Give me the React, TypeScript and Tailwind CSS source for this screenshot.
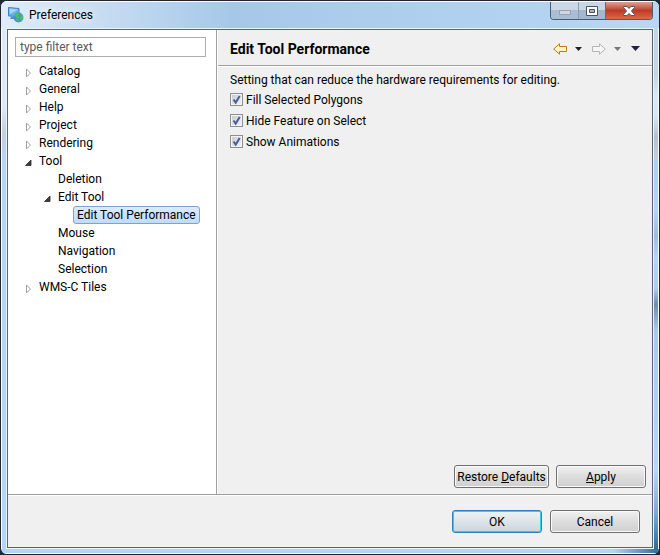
import type { ReactNode } from "react";

const ui = "font-[Roboto,'Open_Sans',sans-serif]";

function Expander({ open }: { open: boolean }) {
  return (
    <svg viewBox="0 0 7 10" className="mt-1 h-[10px] w-[7px] shrink-0">
      {open ? (
        <path d="M6 2V7.500H.5Z" fill="#404040" stroke="#262626" strokeWidth=".8" />
      ) : (
        <path d="M1.500 1V9L5.500 5Z" fill="#fff" stroke="#a0a0a0" strokeWidth="1" />
      )}
    </svg>
  );
}

type Node = { label: string; pad: string; state?: "open" | "closed"; selected?: boolean };

const nodes: Node[] = [
  { label: "Catalog", pad: "pl-[17px]", state: "closed" },
  { label: "General", pad: "pl-[17px]", state: "closed" },
  { label: "Help", pad: "pl-[17px]", state: "closed" },
  { label: "Project", pad: "pl-[17px]", state: "closed" },
  { label: "Rendering", pad: "pl-[17px]", state: "closed" },
  { label: "Tool", pad: "pl-[17px]", state: "open" },
  { label: "Deletion", pad: "pl-[36px]" },
  { label: "Edit Tool", pad: "pl-[36px]", state: "open" },
  { label: "Edit Tool Performance", pad: "pl-[55px]", selected: true },
  { label: "Mouse", pad: "pl-[36px]" },
  { label: "Navigation", pad: "pl-[36px]" },
  { label: "Selection", pad: "pl-[36px]" },
  { label: "WMS-C Tiles", pad: "pl-[17px]", state: "closed" },
];

function TreeRow({ node }: { node: Node }) {
  return (
    <li role="treeitem" aria-selected={!!node.selected} className={`flex h-[18px] items-center ${node.pad}`}>
      <span className="flex w-[10px] shrink-0">{node.state && <Expander open={node.state === "open"} />}</span>
      <span
        className={`flex h-[18px] items-center whitespace-nowrap rounded-[3px] border px-[3px] ${
          node.selected ? "border-[#7da2ce] bg-linear-to-b from-[#dcebfc] to-[#c1dbfc]" : "border-transparent"
        }`}
      >
        {node.label}
      </span>
    </li>
  );
}

function CheckRow({ label }: { label: string }) {
  return (
    <label className="flex h-[21px] items-center gap-[3px]">
      <span className="relative flex size-[13px]">
        <input
          type="checkbox"
          defaultChecked
          className="peer size-[13px] appearance-none border border-[#8e8f8f] bg-linear-to-br from-[#c4c9d0] to-[#f6f6f6] shadow-[inset_0_0_0_1px_#f4f4f4]"
        />
        <svg viewBox="0 0 13 13" className="pointer-events-none absolute inset-0 hidden size-[13px] peer-checked:block">
          <path d="M3.500 6.500L5.700 9.600L9.700 3" fill="none" stroke="#4a5f97" strokeWidth="2" />
        </svg>
      </span>
      {label}
    </label>
  );
}

function PushButton({ children, width, primary }: { children: ReactNode; width: string; primary?: boolean }) {
  return (
    <button
      type="button"
      className={`flex h-[23px] items-center justify-center whitespace-nowrap rounded-[3px] border ${width} ${
        primary
          ? "border-[#2c83b8] bg-linear-to-b from-[#f0f3f4] via-[#dde4e8] via-50% to-[#cbd5da] shadow-[inset_0_0_0_1px_#2fcdfa]"
          : "border-[#707070] bg-linear-to-b from-[#f1f1f1] via-[#dddddd] via-50% to-[#cfcfcf] shadow-[inset_0_0_0_1px_#fafafa]"
      }`}
    >
      {children}
    </button>
  );
}

function Caret({ color, size = "h-[4px] w-[7px]" }: { color: string; size?: string }) {
  return (
    <svg viewBox="0 0 7 4" preserveAspectRatio="none" className={size}>
      <path d="M0 0H7L3.500 4Z" fill={color} />
    </svg>
  );
}

export default function App() {
  return (
    <div className={`h-screen bg-[#1d2b36] text-[12px] leading-[16px] text-black ${ui}`}>
      <div className="flex h-full flex-col overflow-hidden rounded-[7px] border border-[#20242c] bg-[#b9d7f5]">
        <header className="flex h-[27px] shrink-0 items-start justify-between border-t border-white bg-linear-to-r from-[#e0ecf9] via-[#a6c8e8] via-35% to-[#b9d7f5] pr-[6px] pl-[7px]">
          <div className="flex h-[26px] items-center gap-[5px]">
            <svg viewBox="0 0 16 16" className="size-[16px]">
              <path d="M.5 .5L11 1.500V9.500L.5 9Z" fill="#69b3ea" stroke="#3c82c8" />
              <path d="M1.500 1.500L10 2.500L2 7Z" fill="#a5d8f8" />
              <path d="M3 10H7V12H2Z" fill="#4c8fd0" />
              <circle cx="10.500" cy="10.500" r="5" fill="#4c8fd0" />
              <path d="M6 8L9 5.500L12 7L10 9L12 10L10 12L11 15L8 13L9 11ZM12 6L15 9L15 12L13 14L12 11L13 9Z" fill="#46c45a" />
            </svg>
            <h1 className="[text-shadow:0_0_8px_#fff,0_0_12px_#fff]">Preferences</h1>
          </div>
          <div className="flex h-[18px] overflow-hidden rounded-b-[4px] border border-t-0 border-[#4c5b70]">
            <button type="button" aria-label="Minimize" className="flex w-[28px] items-center justify-center border-r border-[#8c9db3] bg-linear-to-b from-[#cbd7e4] from-50% to-[#aabdd2] to-50%">
              <span className="mt-1 h-[5px] w-[12px] border border-[#96a4b4] bg-[#cfd8e2]" />
            </button>
            <button type="button" aria-label="Maximize" className="flex w-[27px] items-center justify-center border-r border-[#5d6f86] bg-linear-to-b from-[#c9d6e4] from-50% to-[#a3b8cf] to-50%">
              <svg viewBox="0 0 12 10" className="h-[10px] w-[12px]">
                <path d="M.5 .5H11.500V9.500H.5Z M3.500 3.500H8.500V6.500H3.500Z" fill="#fff" fillRule="evenodd" stroke="#4a5262" />
              </svg>
            </button>
            <button type="button" aria-label="Close" className="flex w-[46px] items-center justify-center bg-linear-to-b from-[#dfa093] from-0% via-[#bd3a24] via-50% to-[#d9694a]">
              <svg viewBox="0 0 12 10" className="h-[10px] w-[12px]">
                <path d="M.5 .5H4L6 2.500L8 .5H11.500V1.500L8.500 5L11.500 8.500V9.500H8L6 7.500L4 9.500H.5V8.500L3.500 5L.5 1.500Z" fill="#fff" stroke="#53555f" />
              </svg>
            </button>
          </div>
        </header>

        <div className="flex min-h-0 flex-1">
          <div className="w-[5px] shrink-0 border-l border-white bg-linear-to-b from-[#dceafa] from-15% via-[#c5d0dd] via-20% to-[#b4d5f8] to-27%" />
          <main className="flex min-h-0 min-w-0 flex-1 flex-col border border-[#eaf4fd]">
            <div className="flex min-h-0 flex-1 flex-col border border-[#566676] bg-[#f0f0f0]">
              <div className="flex min-h-0 flex-1">
                <aside className="w-[209px] shrink-0 border-r border-[#a0a0a0] bg-white pt-[7px]">
                  <input
                    type="text"
                    aria-label="Filter"
                    placeholder="type filter text"
                    className="ml-[7px] block h-[20px] w-[191px] border border-[#abadb3] bg-white px-1 placeholder:text-[#5a5a5a]"
                  />
                  <ul role="tree" className="mt-[5px]">
                    {nodes.map((n) => (
                      <TreeRow key={n.label} node={n} />
                    ))}
                  </ul>
                </aside>
                <section className="flex min-w-0 flex-1 flex-col border-l border-white">
                  <div className="flex h-[36px] shrink-0 items-center justify-between border-b border-[#a0a0a0] pt-[2px] pr-3 pl-3">
                    <h2 className="text-[14px] font-bold">Edit Tool Performance</h2>
                    <div className="flex items-center gap-[10px]">
                      <div className="flex items-center gap-[8px]">
                        <button type="button" aria-label="Back">
                          <svg viewBox="0 0 14 12" className="h-[12px] w-[14px]">
                            <path d="M.7 6L6.500 .8V3.500H13.500V8.500H6.500V11.200Z" fill="#fff6c4" stroke="#b87a14" />
                          </svg>
                        </button>
                        <button type="button" aria-label="Back history"><Caret color="#222" /></button>
                      </div>
                      <div className="flex items-center gap-[8px]">
                        <button type="button" aria-label="Forward">
                          <svg viewBox="0 0 14 12" className="h-[12px] w-[14px]">
                            <path d="M13.300 6L7.500 .8V3.500H.5V8.500H7.500V11.200Z" fill="#f6f6f6" stroke="#b4b4b4" />
                          </svg>
                        </button>
                        <button type="button" aria-label="Forward history"><Caret color="#777" /></button>
                      </div>
                      <button type="button" aria-label="Menu"><Caret color="#2a1a4a" size="h-[5px] w-[9px]" /></button>
                    </div>
                  </div>
                  <div className="flex flex-1 flex-col border-t border-white pt-[5px] pr-[6px] pb-[6px] pl-3">
                    <p className="leading-[17px]">Setting that can reduce the hardware requirements for editing.</p>
                    <div>
                      <CheckRow label="Fill Selected Polygons" />
                      <CheckRow label="Hide Feature on Select" />
                      <CheckRow label="Show Animations" />
                    </div>
                    <div className="mt-auto flex justify-end gap-[7px]">
                      <PushButton width="w-[95px]"><span>Restore <u>D</u>efaults</span></PushButton>
                      <PushButton width="w-[90px]"><span><u>A</u>pply</span></PushButton>
                    </div>
                  </div>
                </section>
              </div>
              <footer className="flex h-[53px] shrink-0 justify-end gap-[8px] border-t border-[#a0a0a0] pt-[15px] pr-3 shadow-[inset_0_1px_0_#fff]">
                <PushButton width="w-[90px]" primary>OK</PushButton>
                <PushButton width="w-[90px]">Cancel</PushButton>
              </footer>
            </div>
          </main>
          <div className="w-[5px] shrink-0 border-r border-white bg-[linear-gradient(to_bottom,#c3d5ea_0%,#c3d5ea_9%,#d9e9fa_13%,#d5e6f8_17%,#b6c0cb_21%,#c6ced8_25%,#a8cff4_26%,#b2d5f8_35%,#9dbbe0_40%,#b2d5f8_44%,#a8cff0_50%,#6f8ca6_53%,#a4cbee_58%,#b4d7fa_85%,#7fa9d0_93%,#2f6c9c_100%)]" />
        </div>
        <div className="h-[5px] shrink-0 border-b border-white bg-linear-to-r from-[#b4d5f8] from-93% to-[#2f6c9c]" />
      </div>
    </div>
  );
}
